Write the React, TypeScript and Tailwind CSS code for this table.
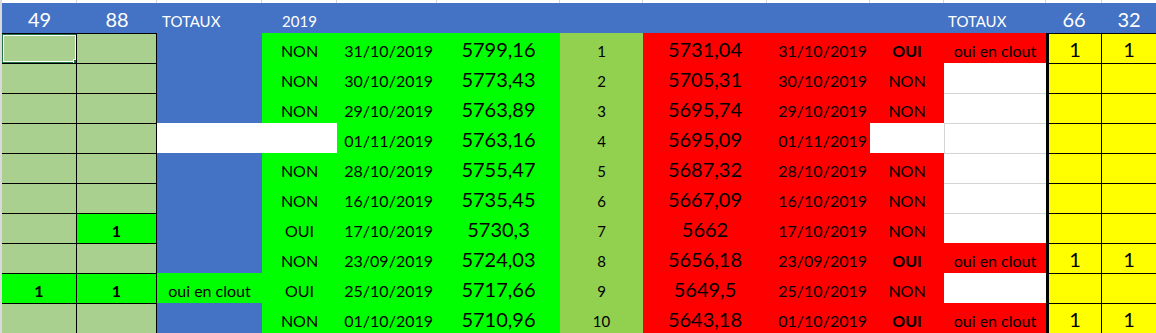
import React from "react";

type Row = {
  a: string;
  b: string;
  c: "blue" | "white" | "clout";
  d: string | null;
  e: string;
  f: string;
  g: string;
  h: string;
  i: string;
  j: string | null;
  clout: boolean;
};

const rows: Row[] = [
  { a: "", b: "", c: "blue", d: "NON", e: "31/10/2019", f: "5799,16", g: "1", h: "5731,04", i: "31/10/2019", j: "OUI", clout: true },
  { a: "", b: "", c: "blue", d: "NON", e: "30/10/2019", f: "5773,43", g: "2", h: "5705,31", i: "30/10/2019", j: "NON", clout: false },
  { a: "", b: "", c: "blue", d: "NON", e: "29/10/2019", f: "5763,89", g: "3", h: "5695,74", i: "29/10/2019", j: "NON", clout: false },
  { a: "", b: "", c: "white", d: null, e: "01/11/2019", f: "5763,16", g: "4", h: "5695,09", i: "01/11/2019", j: null, clout: false },
  { a: "", b: "", c: "blue", d: "NON", e: "28/10/2019", f: "5755,47", g: "5", h: "5687,32", i: "28/10/2019", j: "NON", clout: false },
  { a: "", b: "", c: "blue", d: "NON", e: "16/10/2019", f: "5735,45", g: "6", h: "5667,09", i: "16/10/2019", j: "NON", clout: false },
  { a: "", b: "1", c: "blue", d: "OUI", e: "17/10/2019", f: "5730,3", g: "7", h: "5662", i: "17/10/2019", j: "NON", clout: false },
  { a: "", b: "", c: "blue", d: "NON", e: "23/09/2019", f: "5724,03", g: "8", h: "5656,18", i: "23/09/2019", j: "OUI", clout: true },
  { a: "1", b: "1", c: "clout", d: "OUI", e: "25/10/2019", f: "5717,66", g: "9", h: "5649,5", i: "25/10/2019", j: "NON", clout: false },
  { a: "", b: "", c: "blue", d: "NON", e: "01/10/2019", f: "5710,96", g: "10", h: "5643,18", i: "01/10/2019", j: "OUI", clout: true },
];

const base = "flex items-end pb-[4px] leading-none whitespace-nowrap overflow-hidden";

function Cell({ className, children }: { className: string; children?: React.ReactNode }) {
  return <div className={`${base} ${className}`}>{children}</div>;
}

export default function App() {
  return (
    <div className="w-[1156px] h-[333px] overflow-hidden bg-white font-['Lato','Noto_Sans',sans-serif] text-black">
      <div className="grid grid-cols-[2px_75px_80px_105px_75px_100px_123px_83px_124px_103px_74px_102px_56px_54px] grid-rows-[3px_30px_repeat(10,30px)]">
        {/* top strip */}
        <div className="bg-[#dadada]" />
        <div className="border-r border-[#d4d4d4]" />
        <div className="border-r border-[#d4d4d4]" />
        <div className="border-r border-[#d4d4d4]" />
        <div className="border-r border-[#d4d4d4]" />
        <div className="border-r border-[#d4d4d4]" />
        <div className="border-r border-[#d4d4d4]" />
        <div className="border-r border-[#d4d4d4]" />
        <div className="border-r border-[#d4d4d4]" />
        <div className="border-r border-[#d4d4d4]" />
        <div className="border-r border-[#d4d4d4]" />
        <div className="border-r border-[#d4d4d4]" />
        <div className="border-r border-[#d4d4d4]" />
        <div />

        {/* header */}
        <div className="bg-[#dadada]" />
        <Cell className="bg-[#4472c4] text-white text-[20px] justify-center">49</Cell>
        <Cell className="bg-[#4472c4] text-white text-[20px] justify-center">88</Cell>
        <Cell className="bg-[#4472c4] text-white text-[15px] pl-[5px]">TOTAUX</Cell>
        <Cell className="bg-[#4472c4] text-white text-[15px] justify-center">2019</Cell>
        <Cell className="bg-[#4472c4]" />
        <Cell className="bg-[#4472c4]" />
        <Cell className="bg-[#4472c4]" />
        <Cell className="bg-[#4472c4]" />
        <Cell className="bg-[#4472c4]" />
        <Cell className="bg-[#4472c4]" />
        <Cell className="bg-[#4472c4] text-white text-[15px] pl-[4px]">TOTAUX</Cell>
        <Cell className="bg-[#4472c4] text-white text-[20px] justify-center">66</Cell>
        <Cell className="bg-[#4472c4] text-white text-[20px] justify-center">32</Cell>

        {rows.map((r, idx) => {
          const prevKWhite = idx > 0 && !rows[idx - 1].clout;
          const kWhite = !r.clout;
          return (
            <React.Fragment key={idx}>
              <div className="bg-[#dadada]" />
              {/* A */}
              <div
                className={`${base} relative justify-center border-t border-r border-black text-[16px] font-bold ${
                  r.a ? "bg-[#00ff00]" : "bg-[#a9d08e]"
                }`}
              >
                {r.a}
                {idx === 0 && (
                  <div className="absolute -left-[1px] -top-[1px] w-[77px] h-[31px] border-2 border-[#217346]">
                    <div className="w-full h-full border border-white" />
                    <div className="absolute -right-[4px] -bottom-[4px] w-[7px] h-[7px] bg-[#217346] border border-white" />
                  </div>
                )}
              </div>
              {/* B */}
              <Cell
                className={`justify-center border-t border-r border-black text-[16px] font-bold ${
                  r.b ? "bg-[#00ff00]" : "bg-[#a9d08e]"
                }`}
              >
                {r.b}
              </Cell>
              {/* C */}
              {r.c === "blue" && <Cell className="bg-[#4472c4]" />}
              {r.c === "white" && <Cell className="bg-white" />}
              {r.c === "clout" && (
                <Cell className="bg-[#00ff00] justify-center text-[16px]">oui en clout</Cell>
              )}
              {/* D */}
              {r.d === null ? (
                <Cell className="bg-white" />
              ) : (
                <Cell className="bg-[#00ff00] justify-center text-[16px]">{r.d}</Cell>
              )}
              {/* E */}
              <Cell className="bg-[#00ff00] justify-end pr-[4px] text-[16px]">{r.e}</Cell>
              {/* F */}
              <Cell className="bg-[#00ff00] justify-center text-[20px]">{r.f}</Cell>
              {/* G */}
              <Cell className="bg-[#92d050] justify-center text-[15px]">{r.g}</Cell>
              {/* H */}
              <Cell className="bg-[#ff0000] justify-center text-[20px]">{r.h}</Cell>
              {/* I */}
              <Cell className="bg-[#ff0000] justify-end pr-[3px] text-[16px]">{r.i}</Cell>
              {/* J */}
              {r.j === null ? (
                <Cell className="bg-white" />
              ) : (
                <Cell className={`bg-[#ff0000] justify-center text-[16px] ${r.clout ? "font-bold" : ""}`}>{r.j}</Cell>
              )}
              {/* K */}
              {kWhite ? (
                <Cell
                  className={`bg-white ${prevKWhite ? "border-t border-[#d4d4d4]" : ""} ${
                    r.j === null ? "border-l border-[#d4d4d4]" : ""
                  }`}
                />
              ) : (
                <Cell className="bg-[#ff0000] justify-center text-[16px]">oui en clout</Cell>
              )}
              {/* L */}
              <Cell className="bg-[#ffff00] justify-center text-[20px] border-l-[3px] border-t border-r border-black">
                {r.clout ? "1" : ""}
              </Cell>
              {/* M */}
              <Cell className="bg-[#ffff00] justify-center text-[20px] border-t border-black">
                {r.clout ? "1" : ""}
              </Cell>
            </React.Fragment>
          );
        })}
      </div>
    </div>
  );
}
